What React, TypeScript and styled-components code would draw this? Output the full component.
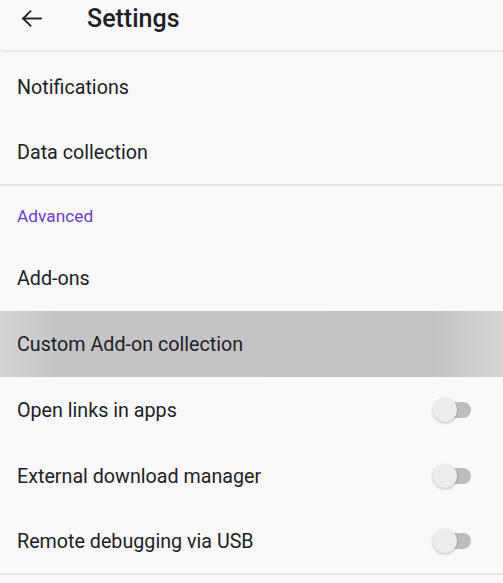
import styled, { createGlobalStyle } from 'styled-components';

const GlobalStyle = createGlobalStyle`
    html, body {
        margin: 0;
        padding: 0;
        background: #f9f9fb;
        font-family: Roboto, "Liberation Sans", sans-serif;
        color: #202023;
    }
`;

const Page = styled.div`
    width: 503px;
    height: 583px;
    overflow: hidden;
    background: #f9f9fb;
    display: flex;
    flex-direction: column;
`;

const Toolbar = styled.header`
    height: 50px;
    flex-shrink: 0;
    display: flex;
    align-items: center;
    gap: 43px;
    padding: 0 0 0 19px;
    background: #f9f9fb;
    box-shadow: 0 1px 3px rgba(0, 0, 0, 0.14);
    position: relative;
    z-index: 2;
`;

const BackButton = styled.div`
    width: 25px;
    height: 25px;
    display: flex;
    align-items: center;
    justify-content: center;
    margin-top: -14px;
`;

const Title = styled.h1`
    margin: -14px 0 0 0;
    font-size: 25px;
    font-weight: 500;
    color: #202023;
`;

const List = styled.div`
    display: flex;
    flex-direction: column;
    padding-top: 4px;
`;

const Row = styled.div<{ $highlight?: boolean; $divider?: boolean }>`
    height: 66px;
    flex-shrink: 0;
    display: flex;
    align-items: center;
    justify-content: space-between;
    padding: 0 32px 0 17px;
    font-size: 19.7px;
    color: #212124;
    box-sizing: border-box;
    background: ${p => p.$highlight
        ? 'linear-gradient(to right, #d4d4d6 0%, #c5c5c7 12%, #c3c3c5 85%, #d6d6d8 100%)'
        : 'transparent'};
    border-bottom: ${p => p.$divider ? '2px solid #e4e4e7' : 'none'};
`;

const SectionHeader = styled.div`
    height: 59px;
    display: flex;
    align-items: center;
    padding: 0 17px;
    font-size: 17.3px;
    color: #6b3fc9;
`;

const Track = styled.div`
    position: relative;
    width: 34px;
    height: 16px;
    border-radius: 8px;
    background: #bdbdc0;
`;

const Thumb = styled.div`
    position: absolute;
    left: -4px;
    top: -4px;
    width: 24px;
    height: 24px;
    border-radius: 50%;
    background: #ececee;
    box-shadow: 0 1px 3px rgba(0, 0, 0, 0.25);
`;

const Switch = () => (
    <Track>
        <Thumb />
    </Track>
);

const BackArrow = () => (
    <svg width="25" height="25" viewBox="0 0 24 24" fill="none" stroke="#202023" strokeWidth="1.8" strokeLinecap="square">
        <path d="M21 12H4" />
        <path d="M11 5l-7 7 7 7" />
    </svg>
);

export default function App() {
    return (
        <>
            <GlobalStyle />
            <Page>
                <Toolbar>
                    <BackButton><BackArrow /></BackButton>
                    <Title>Settings</Title>
                </Toolbar>
                <List>
                    <Row>Notifications</Row>
                    <Row $divider>Data collection</Row>
                    <SectionHeader>Advanced</SectionHeader>
                    <Row>Add-ons</Row>
                    <Row $highlight>Custom Add-on collection</Row>
                    <Row>Open links in apps<Switch /></Row>
                    <Row>External download manager<Switch /></Row>
                    <Row $divider>Remote debugging via USB<Switch /></Row>
                </List>
            </Page>
        </>
    );
}
